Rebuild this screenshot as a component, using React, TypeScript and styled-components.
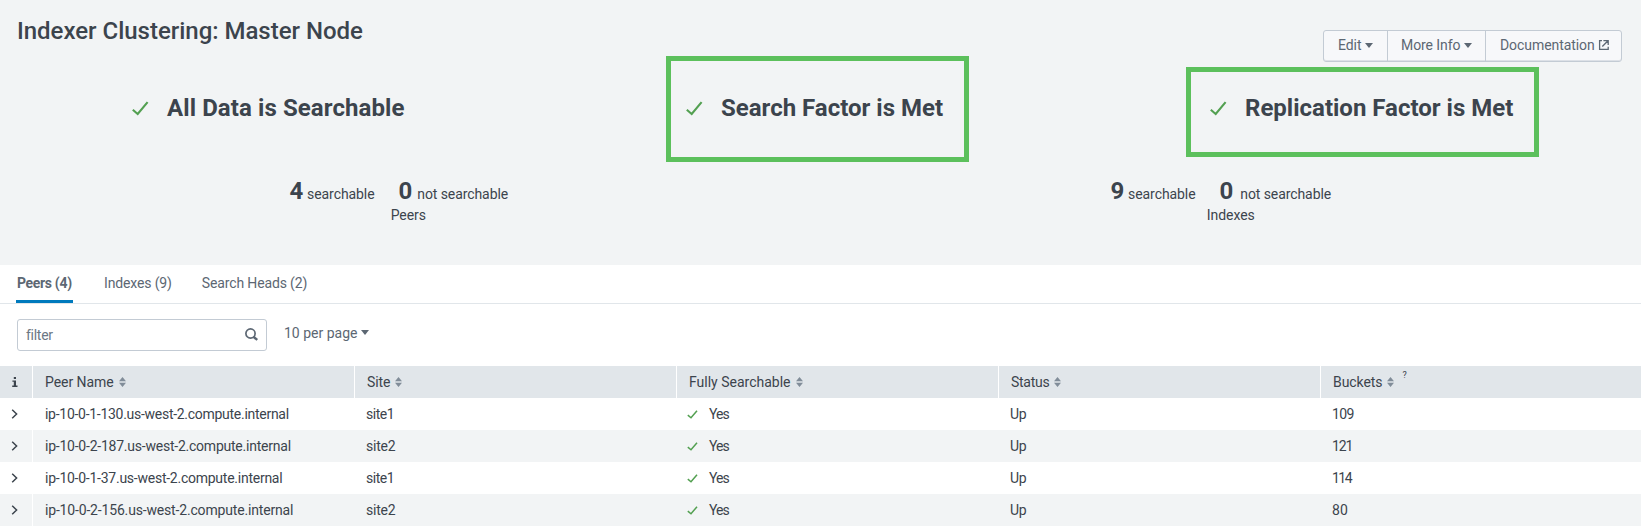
import React from "react";
import styled, { createGlobalStyle, css } from "styled-components";

const color = {
  text: "#3c444d",
  muted: "#5c6773",
  panel: "#f2f4f5",
  head: "#e1e6ea",
  border: "#c3cbd4",
  sort: "#818d99",
  blue: "#007abd",
  check: "#53a051",
  frame: "#5cc05c",
};

const GlobalStyle = createGlobalStyle`
  * { box-sizing: border-box; }
  body {
    margin: 0;
    background: #fff;
    color: ${color.text};
    font: 14px/20px Roboto, "Liberation Sans", sans-serif;
    overflow: hidden;
  }
  svg { display: block; flex: none; }
`;

const Page = styled.main`
  width: 1641px;
  height: 528px;
`;

const Summary = styled.section`
  height: 265px;
  padding-top: 16px;
  background: ${color.panel};
`;

const Header = styled.header`
  display: flex;
  justify-content: space-between;
  align-items: flex-start;
  padding: 0 19px 0 17px;
  height: 46px;
`;

const Title = styled.h1`
  margin: 0;
  font-size: 24px;
  line-height: 30px;
  font-weight: 500;
  letter-spacing: -0.02px;
`;

const ButtonGroup = styled.div`
  display: flex;
  height: 32px;
  margin-top: 14px;
  border: 1px solid ${color.border};
  border-radius: 3px;
  background: #f7f8fa;
  box-shadow: inset 0 -1px 0 #dde1e7;
`;

const Button = styled.button<{ $width: number }>`
  display: flex;
  align-items: center;
  width: ${(p) => p.$width}px;
  padding: 0 0 2px 13px;
  border: 0;
  background: none;
  color: ${color.muted};
  font: inherit;
  letter-spacing: -0.07px;
  white-space: nowrap;
  & + & {
    border-left: 1px solid ${color.border};
  }
  &:first-child,
  &:last-child {
    padding-left: 14px;
  }
`;

const StatusRow = styled.div`
  display: grid;
  grid-template-columns: 554px 524px auto;
  margin-top: 28px;
  padding-left: 132px;
`;

const Status = styled.div`
  position: relative;
  display: flex;
  align-items: center;
  justify-self: start;
  height: 36px;
`;

const StatusText = styled.h2<{ $ls?: number }>`
  margin: 0 0 0 18px;
  font-size: 24px;
  line-height: 36px;
  font-weight: 700;
  letter-spacing: ${(p) => p.$ls ?? 0}px;
`;

const Frame = styled.span<{ $area: "search" | "replication" }>`
  position: absolute;
  border: 5px solid ${color.frame};
  ${(p) =>
    p.$area === "search"
      ? css`inset: -34px -26px -36px -20px;`
      : css`inset: -23px -26px -31px -24px;`}
`;

const Counts = styled.div`
  display: grid;
  grid-template-columns: 1fr 1fr;
  margin-top: 52px;
`;

const CountGroup = styled.div`
  display: flex;
  flex-direction: column;
  align-items: center;
  letter-spacing: -0.08px;
`;

const CountLine = styled.div<{ $trail: number }>`
  display: flex;
  align-items: baseline;
  height: 27px;
  line-height: 27px;
  padding-right: ${(p) => p.$trail}px;
`;

const Count = styled.strong<{ $gap: number }>`
  font-size: 24px;
  margin-right: ${(p) => p.$gap}px;
`;

const CountLabel = styled.span`
  & + ${Count} {
    margin-left: 24px;
  }
`;

const CountTitle = styled.div<{ $trail?: number }>`
  padding-right: ${(p) => p.$trail ?? 0}px;
`;

const Tabs = styled.nav`
  display: flex;
  height: 39px;
  padding-left: 16px;
  border-bottom: 1px solid ${color.head};
`;

const Tab = styled.a<{ $active?: boolean; $ls: number; $gap: number }>`
  height: 38px;
  padding: 1px 1px 0;
  margin-right: ${(p) => p.$gap}px;
  line-height: 35px;
  color: ${color.muted};
  letter-spacing: ${(p) => p.$ls}px;
  white-space: nowrap;
  ${(p) =>
    p.$active &&
    css`
      width: 57px;
      font-weight: 700;
      border-bottom: 3px solid ${color.blue};
    `}
`;

const Toolbar = styled.div`
  display: flex;
  padding: 15px 17px;
  height: 62px;
`;

const Filter = styled.label`
  display: flex;
  align-items: center;
  justify-content: space-between;
  width: 250px;
  height: 32px;
  padding: 0 8px 1px 8px;
  border: 1px solid ${color.border};
  border-radius: 3px;
  color: #6b7785;
  letter-spacing: -0.28px;
`;

const PerPage = styled.div`
  display: flex;
  align-items: center;
  height: 27px;
  margin-left: 17px;
  color: ${color.muted};
`;

const Table = styled.table`
  width: 1641px;
  table-layout: fixed;
  border-collapse: separate;
  border-spacing: 0;
`;

const Col = styled.col<{ $width: number }>`
  width: ${(p) => p.$width}px;
`;

const HeadCell = styled.th`
  height: 32px;
  padding: 0 0 0 12px;
  background: ${color.head};
  border-right: 1px solid #fff;
  text-align: left;
  font-weight: 400;
  &:last-child {
    border-right: 0;
  }
`;

const HeadLabel = styled.span`
  display: flex;
  align-items: center;
`;

const SpacedLabel = styled.span<{ $ls: number }>`
  letter-spacing: ${(p) => p.$ls}px;
`;

const Help = styled.sup`
  align-self: flex-start;
  margin: -3px 0 0 8px;
  height: 12px;
  font-size: 9px;
  line-height: 12px;
`;

const BodyRow = styled.tr`
  &:nth-child(even) {
    background: ${color.panel};
  }
`;

const Cell = styled.td<{ $ls?: number }>`
  height: 32px;
  padding: 0 0 0 11px;
  letter-spacing: ${(p) => p.$ls ?? 0}px;
  white-space: nowrap;
  &:first-child {
    border-right: 1px solid #fff;
  }
  &:nth-child(2) {
    padding-left: 12px;
  }
  &:nth-child(4) {
    padding-left: 10px;
  }
`;

const Verdict = styled.span`
  display: flex;
  align-items: center;
  gap: 11px;
`;

const Caret = () => (
  <svg width="12" height="5" viewBox="-4 0 12 5">
    <path d="M0 0h8L4 5z" fill={color.muted} />
  </svg>
);

const BigCheck = () => (
  <svg width="17" height="15" viewBox="0 0 17 15">
    <path d="M.8 8.8l4.9 4.2L15.6 1.2" fill="none" stroke={color.check} strokeWidth="2.1" />
  </svg>
);

const SmallCheck = () => (
  <svg width="11" height="9" viewBox="0 0 11 9">
    <path d="M.8 5.1l3.2 2.7L10 .7" fill="none" stroke={color.check} strokeWidth="1.5" />
  </svg>
);

const External = () => (
  <svg width="14" height="10" viewBox="-4 0 14 10">
    <path d="M3 .6H.6v8.8h8.6V6.8M4.4.6h4.8v4.5M9 .8L3.3 6.5" fill="none" stroke={color.muted} strokeWidth="1.3" />
  </svg>
);

const Magnifier = () => (
  <svg width="13" height="13" viewBox="0 0 13 13">
    <circle cx="5.5" cy="5.5" r="4.6" fill="none" stroke={color.muted} strokeWidth="1.7" />
    <path d="M8.4 8.7l3.9 3.2" fill="none" stroke={color.muted} strokeWidth="2.4" />
  </svg>
);

const SortIcon = () => (
  <svg width="12" height="10" viewBox="-5 0 12 10">
    <path d="M0 4.3L3.5 0 7 4.3zM0 5.7h7L3.5 10z" fill={color.sort} />
  </svg>
);

const InfoIcon = () => (
  <svg width="6" height="10" viewBox="0 0 6 10">
    <path d="M1.8 0h2.2v2H1.8zM.4 3.4H4v5.2h1.5V10H.2V8.6h1.6V4.8H.4z" fill={color.text} />
  </svg>
);

const Chevron = () => (
  <svg width="7" height="10" viewBox="0 0 7 10">
    <path d="M1.2.8L5.6 5 1.2 9.2" fill="none" stroke={color.text} strokeWidth="1.5" />
  </svg>
);

const columns = [
  { label: "Peer Name", ls: -0.05 },
  { label: "Site", ls: -0.1 },
  { label: "Fully Searchable", ls: 0 },
  { label: "Status", ls: -0.28 },
  { label: "Buckets", ls: -0.07 },
];

const peers = [
  { name: "ip-10-0-1-130.us-west-2.compute.internal", ls: -0.28, site: "site1", siteLs: -0.45, buckets: "109", numLs: -0.6 },
  { name: "ip-10-0-2-187.us-west-2.compute.internal", ls: -0.23, site: "site2", siteLs: -0.2, buckets: "121", numLs: -1.1 },
  { name: "ip-10-0-1-37.us-west-2.compute.internal", ls: -0.25, site: "site1", siteLs: -0.45, buckets: "114", numLs: -1.5 },
  { name: "ip-10-0-2-156.us-west-2.compute.internal", ls: -0.17, site: "site2", siteLs: -0.2, buckets: "80", numLs: 0.2 },
];

export default function App() {
  return (
    <Page>
      <GlobalStyle />
      <Summary>
        <Header>
          <Title>Indexer Clustering: Master Node</Title>
          <ButtonGroup>
            <Button $width={63}>Edit<Caret /></Button>
            <Button $width={98}>More Info<Caret /></Button>
            <Button $width={136}>Documentation<External /></Button>
          </ButtonGroup>
        </Header>
        <StatusRow>
          <Status><BigCheck /><StatusText $ls={0.09}>All Data is Searchable</StatusText></Status>
          <Status><BigCheck /><StatusText>Search Factor is Met</StatusText><Frame $area="search" /></Status>
          <Status><BigCheck /><StatusText>Replication Factor is Met</StatusText><Frame $area="replication" /></Status>
        </StatusRow>
        <Counts>
          <CountGroup>
            <CountLine $trail={23}>
              <Count $gap={4}>4</Count><CountLabel>searchable</CountLabel>
              <Count $gap={5}>0</Count><CountLabel>not searchable</CountLabel>
            </CountLine>
            <CountTitle $trail={4}>Peers</CountTitle>
          </CountGroup>
          <CountGroup>
            <CountLine $trail={20}>
              <Count $gap={4}>9</Count><CountLabel>searchable</CountLabel>
              <Count $gap={7}>0</Count><CountLabel>not searchable</CountLabel>
            </CountLine>
            <CountTitle>Indexes</CountTitle>
          </CountGroup>
        </Counts>
      </Summary>
      <Tabs>
        <Tab $active $ls={-0.33} $gap={30}>Peers (4)</Tab>
        <Tab $ls={-0.14} $gap={28}>Indexes (9)</Tab>
        <Tab $ls={-0.14} $gap={0}>Search Heads (2)</Tab>
      </Tabs>
      <Toolbar>
        <Filter>filter<Magnifier /></Filter>
        <PerPage>10 per page<Caret /></PerPage>
      </Toolbar>
      <Table>
        <colgroup>
          <Col $width={33} />
          <Col $width={322} />
          <Col $width={322} />
          <Col $width={322} />
          <Col $width={322} />
          <Col $width={320} />
        </colgroup>
        <thead>
          <tr>
            <HeadCell><InfoIcon /></HeadCell>
            {columns.map((c) => (
              <HeadCell key={c.label}>
                <HeadLabel>
                  <SpacedLabel $ls={c.ls}>{c.label}</SpacedLabel>
                  <SortIcon />
                  {c.label === "Buckets" && <Help>?</Help>}
                </HeadLabel>
              </HeadCell>
            ))}
          </tr>
        </thead>
        <tbody>
          {peers.map((p) => (
            <BodyRow key={p.name}>
              <Cell><Chevron /></Cell>
              <Cell $ls={p.ls}>{p.name}</Cell>
              <Cell $ls={p.siteLs}>{p.site}</Cell>
              <Cell $ls={-0.9}><Verdict><SmallCheck />Yes</Verdict></Cell>
              <Cell $ls={-0.4}>Up</Cell>
              <Cell $ls={p.numLs}>{p.buckets}</Cell>
            </BodyRow>
          ))}
        </tbody>
      </Table>
    </Page>
  );
}
